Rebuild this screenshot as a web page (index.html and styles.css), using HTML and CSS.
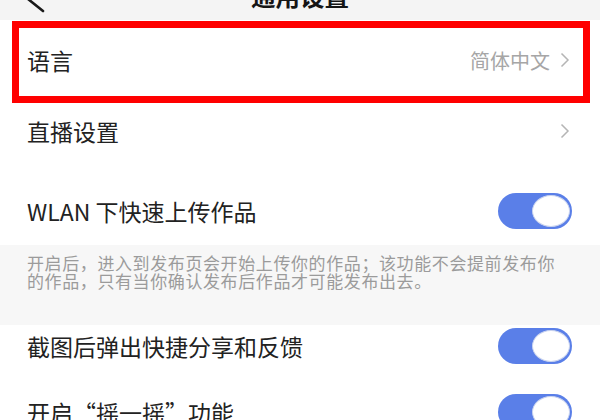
FILE: index.html
```html
<!DOCTYPE html>
<html lang="zh-CN">
<head>
<meta charset="utf-8">
<link rel="stylesheet" href="styles.css">
</head>
<body>
<div class="page">
  <div class="header">
    <div class="back">
      <svg width="24" height="20" viewBox="0 0 24 20"><polyline points="17,-14 2,-1 17,11" fill="none" stroke="#1a1a1a" stroke-width="2.6" stroke-linecap="round" stroke-linejoin="round"/></svg>
    </div>
    <div class="title">通用设置</div>
    <div></div>
  </div>

  <div class="row highlight">
    <span class="label">语言</span>
    <span class="value">简体中文</span>
    <svg class="chev" width="10" height="16" viewBox="0 0 10 16"><polyline points="1.5,1.5 8,8 1.5,14.5" fill="none" stroke="#b5b5b5" stroke-width="1.5"/></svg>
  </div>

  <div class="row link">
    <span class="label">直播设置</span>
    <svg class="chev" width="10" height="16" viewBox="0 0 10 16"><polyline points="1.5,1.5 8,8 1.5,14.5" fill="none" stroke="#b5b5b5" stroke-width="1.5"/></svg>
  </div>

  <div class="row toggle-row first">
    <span class="label">WLAN 下快速上传作品</span>
    <span class="toggle"><span class="knob"></span></span>
  </div>

  <div class="desc">开启后，进入到发布页会开始上传你的作品；该功能不会提前发布你<br>的作品，只有当你确认发布后作品才可能发布出去。</div>

  <div class="row toggle-row r4">
    <span class="label">截图后弹出快捷分享和反馈</span>
    <span class="toggle"><span class="knob"></span></span>
  </div>

  <div class="row toggle-row r5">
    <span class="label">开启“摇一摇”功能</span>
    <span class="toggle"><span class="knob"></span></span>
  </div>
</div>
</body>
</html>
```
FILE: styles.css
```css
html, body {
  margin: 0;
  padding: 0;
  background: #ffffff;
}
body {
  font-family: "Noto Sans CJK SC", "Noto Sans", sans-serif;
  color: #222222;
}
.page {
  width: 600px;
  height: 420px;
  overflow: hidden;
  background: #ffffff;
}
.header {
  height: 20px;
  background: #f4f4f4;
  display: grid;
  grid-template-columns: 1fr auto 1fr;
  align-items: start;
  overflow: hidden;
  margin-bottom: 1px;
}
.back {
  padding-left: 26px;
  height: 20px;
}
.back svg {
  display: block;
  overflow: visible;
}
.title {
  font-size: 24.5px;
  font-weight: 700;
  line-height: 26px;
  margin-top: -17px;
  color: #151515;
}
.row {
  display: flex;
  align-items: center;
  box-sizing: border-box;
  padding: 0 30px 0 27px;
}
.label {
  font-size: 23px;
  line-height: 28px;
  color: #222222;
  flex: 1;
  white-space: nowrap;
}
.highlight {
  height: 82px;
  margin: 0 10px 0 12px;
  border: 7px solid #ff0000;
  padding: 0 13px 4px 8px;
}
.value {
  font-size: 20px;
  color: #a6a6a6;
  margin-right: 10px;
}
.chev {
  display: block;
}
.link {
  height: 56px;
}
.toggle-row {
  padding-right: 28px;
}
.first {
  height: 86px;
  padding-top: 18px;
}
.r4 {
  height: 42px;
}
.r5 {
  height: 90px;
}
.toggle {
  width: 74px;
  height: 36px;
  border-radius: 18px;
  background: #5a7fe8;
  display: flex;
  align-items: center;
  justify-content: flex-end;
  padding-right: 2px;
  box-sizing: border-box;
}
.knob {
  width: 38px;
  height: 32px;
  border-radius: 50%;
  background: #ffffff;
  box-sizing: border-box;
  border: 1.5px solid #c9d3ee;
}
.desc {
  background: #f7f7f7;
  height: 80px;
  box-sizing: border-box;
  padding: 9px 20px 0 27px;
  font-size: 17px;
  letter-spacing: 0.6px;
  line-height: 18px;
  color: #9b9b9b;
  white-space: nowrap;
}
```
